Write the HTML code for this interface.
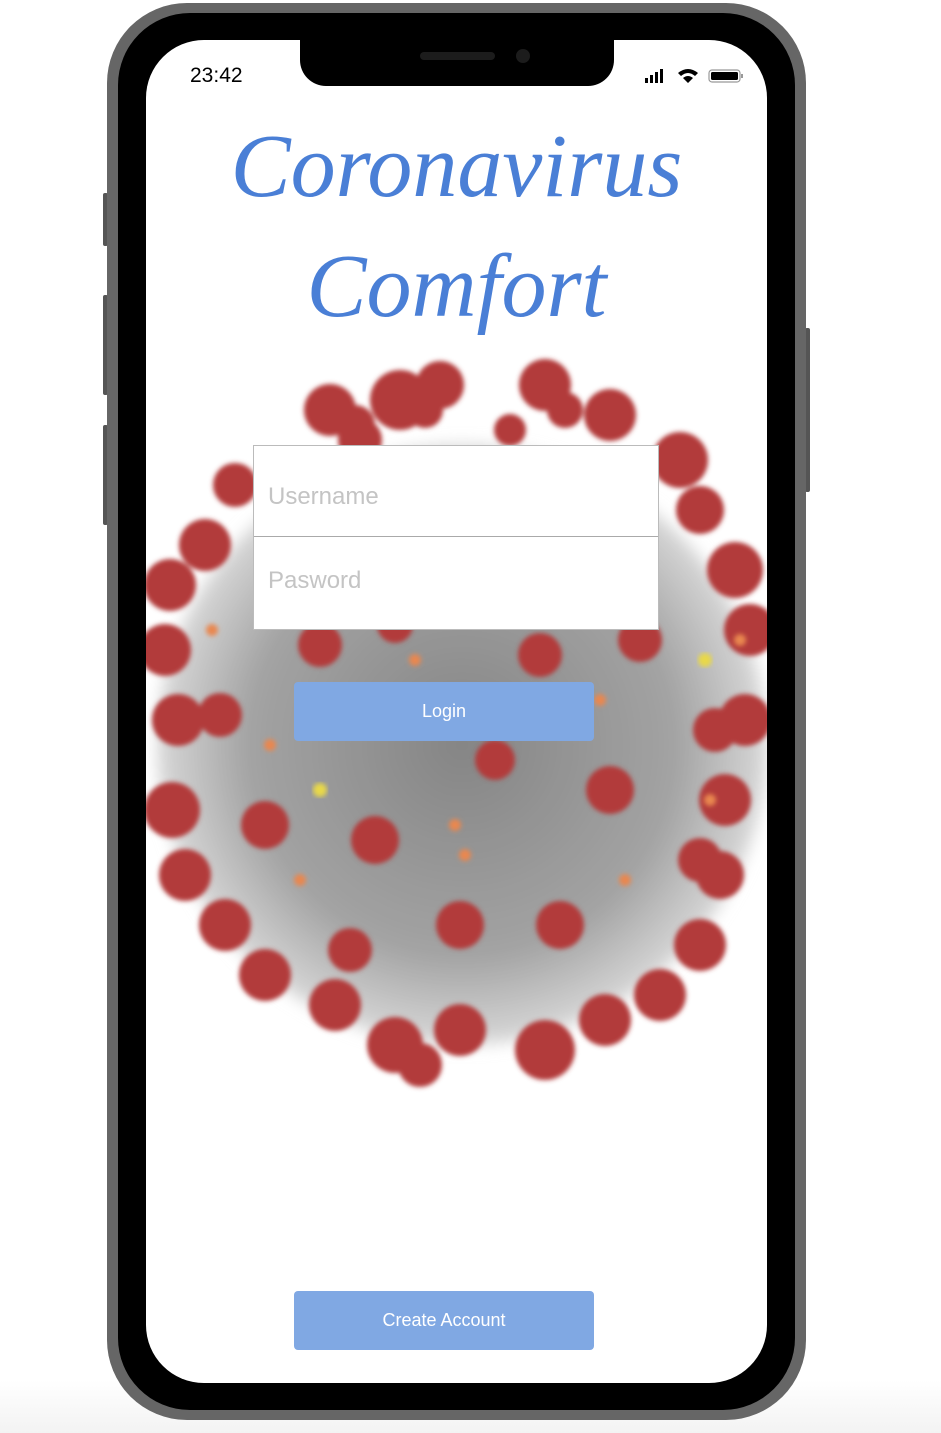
<!DOCTYPE html>
<html><head><meta charset="utf-8">
<style>
html,body{margin:0;padding:0;}
body{width:941px;height:1433px;position:relative;overflow:hidden;background:linear-gradient(#fff 0,#fff 1380px,#f3f3f3 1433px);font-family:"Liberation Sans",sans-serif;}
.frame{position:absolute;left:107px;top:3px;width:699px;height:1417px;background:#666;border-radius:80px;}
.bezel{position:absolute;left:118px;top:13px;width:677px;height:1397px;background:#000;border-radius:72px;}
.btn-side{position:absolute;background:#555;width:5px;border-radius:2px;}
.screen{position:absolute;left:146px;top:40px;width:621px;height:1343px;background:#fff;border-radius:58px;overflow:hidden;}
.notch{position:absolute;left:154px;top:-2px;width:314px;height:48px;background:#000;border-radius:0 0 26px 26px;}
.spk{position:absolute;left:120px;top:14px;width:75px;height:8px;background:#1c1c1c;border-radius:4px;}
.cam{position:absolute;left:216px;top:11px;width:14px;height:14px;background:#1c1c1c;border-radius:50%;}
.time{position:absolute;left:44px;top:24px;font-size:21px;color:#000;}
.title{position:absolute;left:0;width:621px;text-align:center;color:#4a7fd6;font-family:"Liberation Serif",serif;font-style:italic;font-size:90px;line-height:1;}
.inputs{position:absolute;left:107px;top:405px;width:404px;height:183px;background:#fff;border:1px solid #bbb;}
.inputs div{position:absolute;left:14px;font-size:24px;color:#c4c4c4;}
.btn{position:absolute;left:148px;width:300px;height:59px;background:#80a8e3;border-radius:4px;color:#fff;font-size:18px;text-align:center;line-height:59px;}
</style></head><body>
<div class="btn-side" style="left:103px;top:193px;height:53px"></div>
<div class="btn-side" style="left:103px;top:295px;height:100px"></div>
<div class="btn-side" style="left:103px;top:425px;height:100px"></div>
<div class="btn-side" style="left:805px;top:328px;height:164px"></div>
<div class="frame"></div>
<div class="bezel"></div>
<div class="screen">
<svg width="621" height="1343" style="position:absolute;left:0;top:0" viewBox="146 40 621 1343">
<defs>
<filter id="b" x="-20%" y="-20%" width="140%" height="140%"><feGaussianBlur stdDeviation="8"/></filter>
<filter id="b2"><feGaussianBlur stdDeviation="2.5"/></filter>
<radialGradient id="g" cx="50%" cy="50%" r="50%"><stop offset="0" stop-color="#858585"/><stop offset="0.7" stop-color="#a3a3a3"/><stop offset="1" stop-color="#d8d8d8"/></radialGradient>
</defs>
<ellipse cx="462" cy="745" rx="305" ry="300" fill="url(#g)" filter="url(#b)"/>
<g fill="#b23a3a" filter="url(#b2)">
<circle cx="330" cy="410" r="26"/><circle cx="355" cy="425" r="20"/><circle cx="400" cy="400" r="30"/><circle cx="440" cy="385" r="24"/><circle cx="425" cy="410" r="18"/><circle cx="545" cy="385" r="26"/><circle cx="565" cy="410" r="18"/><circle cx="610" cy="415" r="26"/><circle cx="680" cy="460" r="28"/><circle cx="360" cy="440" r="22"/><circle cx="510" cy="430" r="16"/>
<circle cx="700" cy="510" r="24"/><circle cx="735" cy="570" r="28"/><circle cx="750" cy="630" r="26"/><circle cx="745" cy="720" r="26"/><circle cx="725" cy="800" r="26"/><circle cx="720" cy="875" r="24"/><circle cx="700" cy="945" r="26"/><circle cx="660" cy="995" r="26"/>
<circle cx="235" cy="485" r="22"/><circle cx="205" cy="545" r="26"/><circle cx="170" cy="585" r="26"/><circle cx="165" cy="650" r="26"/><circle cx="178" cy="720" r="26"/><circle cx="172" cy="810" r="28"/><circle cx="185" cy="875" r="26"/><circle cx="225" cy="925" r="26"/><circle cx="265" cy="975" r="26"/>
<circle cx="335" cy="1005" r="26"/><circle cx="395" cy="1045" r="28"/><circle cx="460" cy="1030" r="26"/><circle cx="545" cy="1050" r="30"/><circle cx="605" cy="1020" r="26"/><circle cx="420" cy="1065" r="22"/>
<circle cx="320" cy="645" r="22"/><circle cx="395" cy="625" r="18"/><circle cx="540" cy="655" r="22"/><circle cx="640" cy="640" r="22"/><circle cx="220" cy="715" r="22"/><circle cx="265" cy="825" r="24"/><circle cx="375" cy="840" r="24"/><circle cx="495" cy="760" r="20"/><circle cx="610" cy="790" r="24"/><circle cx="715" cy="730" r="22"/><circle cx="460" cy="925" r="24"/><circle cx="560" cy="925" r="24"/><circle cx="350" cy="950" r="22"/><circle cx="700" cy="860" r="22"/>
</g>
<g fill="#e9874f" filter="url(#b2)">
<circle cx="415" cy="660" r="6"/><circle cx="600" cy="700" r="6"/><circle cx="270" cy="745" r="6"/><circle cx="455" cy="825" r="6"/><circle cx="465" cy="855" r="6"/><circle cx="625" cy="880" r="6"/><circle cx="710" cy="800" r="6"/><circle cx="300" cy="880" r="6"/><circle cx="212" cy="630" r="6"/><circle cx="740" cy="640" r="6"/>
</g>
<circle cx="705" cy="660" r="7" fill="#e8d84a" filter="url(#b2)"/>
<circle cx="320" cy="790" r="7" fill="#e8d84a" filter="url(#b2)"/>
</svg>
<div class="notch"><div class="spk"></div><div class="cam"></div></div>
<div class="time">23:42</div>
<svg style="position:absolute;left:498px;top:27px" width="102" height="18" viewBox="0 0 102 18">
<rect x="1" y="11" width="3" height="5" fill="#000"/><rect x="6" y="8" width="3" height="8" fill="#000"/><rect x="11" y="5" width="3" height="11" fill="#000"/><rect x="16" y="2" width="3" height="14" fill="#000"/>
<path d="M34 6 Q44 -2 54 6 L51 9 Q44 3 37 9Z M39 11 Q44 7 49 11 L44 16Z" fill="#000"/>
<rect x="65" y="3" width="31" height="12" rx="3" fill="none" stroke="#999" stroke-width="1.2"/><rect x="67" y="5" width="27" height="8" rx="1.5" fill="#000"/><rect x="97" y="7" width="2" height="4" fill="#999"/>
</svg>
<div class="title" style="top:82px">Coronavirus</div>
<div class="title" style="top:202px">Comfort</div>
<div class="inputs">
<div style="top:37px">Username</div>
<div style="top:0;left:0;width:404px;height:90px;border-bottom:1px solid #aaa"></div>
<div style="top:121px">Pasword</div>
</div>
<div class="btn" style="top:642px">Login</div>
<div class="btn" style="top:1251px">Create Account</div>
</div>
</body></html>
